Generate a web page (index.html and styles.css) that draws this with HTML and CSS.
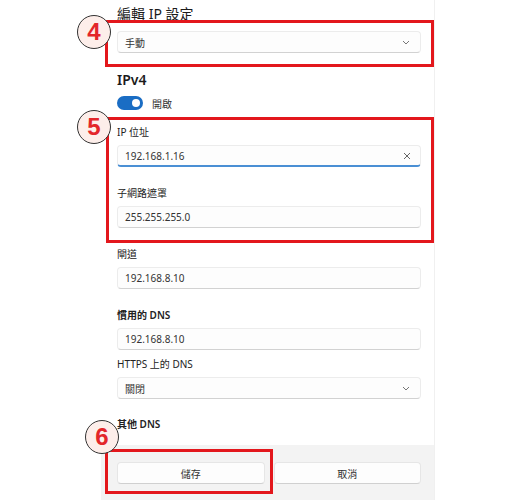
FILE: index.html
```html
<!DOCTYPE html>
<html lang="zh-Hant">
<head>
<meta charset="utf-8">
<title>編輯 IP 設定</title>
<link rel="stylesheet" href="styles.css">
</head>
<body>
<div class="page">
  <div class="panel">
    <div class="content">
      <h1 class="title">編輯 IP 設定</h1>
      <div class="select">
        <span>手動</span>
        <svg class="chev" width="8" height="5" viewBox="0 0 8 5"><path d="M1 1 L4 4 L7 1" fill="none" stroke="#777" stroke-width="1"/></svg>
      </div>
      <h2 class="section">IPv4</h2>
      <div class="toggle-row">
        <span class="toggle"><span class="knob"></span></span>
        <span class="toggle-text">開啟</span>
      </div>
      <div class="field first">
        <div class="label">IP 位址</div>
        <div class="input focused">
          <span>192.168.1.16</span>
          <svg class="clear" width="8" height="8" viewBox="0 0 8 8"><path d="M1 1 L7 7 M7 1 L1 7" fill="none" stroke="#666" stroke-width="1"/></svg>
        </div>
      </div>
      <div class="field">
        <div class="label">子網路遮罩</div>
        <div class="input"><span>255.255.255.0</span></div>
      </div>
      <div class="field">
        <div class="label">閘道</div>
        <div class="input"><span>192.168.8.10</span></div>
      </div>
      <div class="field">
        <div class="label strong">慣用的 DNS</div>
        <div class="input"><span>192.168.8.10</span></div>
      </div>
      <div class="field tight">
        <div class="label">HTTPS 上的 DNS</div>
        <div class="select">
          <span>關閉</span>
          <svg class="chev" width="8" height="5" viewBox="0 0 8 5"><path d="M1 1 L4 4 L7 1" fill="none" stroke="#777" stroke-width="1"/></svg>
        </div>
      </div>
      <div class="field last">
        <div class="label strong">其他 DNS</div>
      </div>
    </div>
    <div class="footer">
      <button class="btn">儲存</button>
      <button class="btn">取消</button>
    </div>
  </div>

  <div class="mark box4"></div>
  <div class="mark box5"></div>
  <div class="mark box6"></div>
  <div class="badge b4">4</div>
  <div class="badge b5">5</div>
  <div class="badge b6">6</div>
</div>
</body>
</html>
```

FILE: styles.css
```css
* { box-sizing: border-box; }
html, body { margin: 0; padding: 0; background: #fff; }
body {
  font-family: "Noto Sans", "Noto Sans CJK TC", sans-serif;
  color: #222;
}
.page {
  position: relative;
  width: 532px;
  height: 500px;
  overflow: hidden;
}
.panel {
  margin-left: 101px;
  width: 334px;
  height: 500px;
  border-right: 1px solid #f0f0f0;
  display: flex;
  flex-direction: column;
  background: #fff;
}
.content {
  flex: 1;
  overflow: hidden;
  padding: 3px 13px 0 16px;
}
.title {
  margin: 0;
  font-size: 14px;
  line-height: 22px;
  font-weight: 400;
  color: #1b1b1b;
}
.select, .input {
  height: 22px;
  background: #fdfdfd;
  border: 1px solid #ececec;
  border-bottom-color: #d2d2d2;
  border-radius: 4px;
  display: flex;
  align-items: center;
  justify-content: space-between;
  padding: 0 10px 0 7px;
  font-size: 10px;
  color: #333;
}
.content > .select { margin-top: 6px; }
.chev { display: block; }
.clear { display: block; margin-right: -1px; }
.section {
  margin: 17px 0 0;
  font-size: 14px;
  line-height: 20px;
  font-weight: 600;
  color: #1b1b1b;
}
.toggle-row {
  margin-top: 6px;
  height: 14px;
  display: flex;
  align-items: center;
  gap: 9px;
  font-size: 10px;
  color: #333;
}
.toggle {
  width: 26px;
  height: 14px;
  border-radius: 7px;
  background: #1a6dc4;
  display: flex;
  align-items: center;
  justify-content: flex-end;
  padding-right: 3px;
}
.knob {
  width: 8px;
  height: 8px;
  border-radius: 50%;
  background: #fff;
}
.field { margin-top: 19px; }
.field.first { margin-top: 15px; }
.field.tight { margin-top: 7px; }
.field.last { margin-top: 18px; }
.label {
  font-size: 10px;
  line-height: 14px;
  margin-bottom: 6px;
  color: #222;
}
.label.strong { font-weight: 600; }
.input.focused {
  border-bottom: 2px solid #4a8fd4;
}
.footer {
  height: 55px;
  flex: none;
  background: #f3f3f3;
  display: flex;
  gap: 9px;
  padding: 17px 13px 0 16px;
  align-items: flex-start;
}
.btn {
  flex: 1;
  height: 22px;
  background: #fdfdfd;
  border: 1px solid #e6e6e6;
  border-bottom-color: #d0d0d0;
  border-radius: 4px;
  font-family: inherit;
  font-size: 10px;
  color: #333;
  padding: 0;
}
.mark {
  position: absolute;
  border: 3px solid #e3171c;
}
.box4 { left: 105px; top: 20px; width: 329px; height: 47px; }
.box5 { left: 106px; top: 117px; width: 328px; height: 126px; }
.box6 { left: 105px; top: 449px; width: 168px; height: 45px; }
.badge {
  position: absolute;
  width: 34px;
  height: 34px;
  border-radius: 50%;
  border: 1px solid #333;
  background: #fdeeea;
  color: #e3262a;
  font-family: "Liberation Sans", sans-serif;
  font-weight: 700;
  font-size: 24px;
  line-height: 32px;
  text-align: center;
  z-index: 2;
}
.b4 { left: 77px; top: 15px; }
.b5 { left: 77px; top: 110px; }
.b6 { left: 85px; top: 420px; }
```
